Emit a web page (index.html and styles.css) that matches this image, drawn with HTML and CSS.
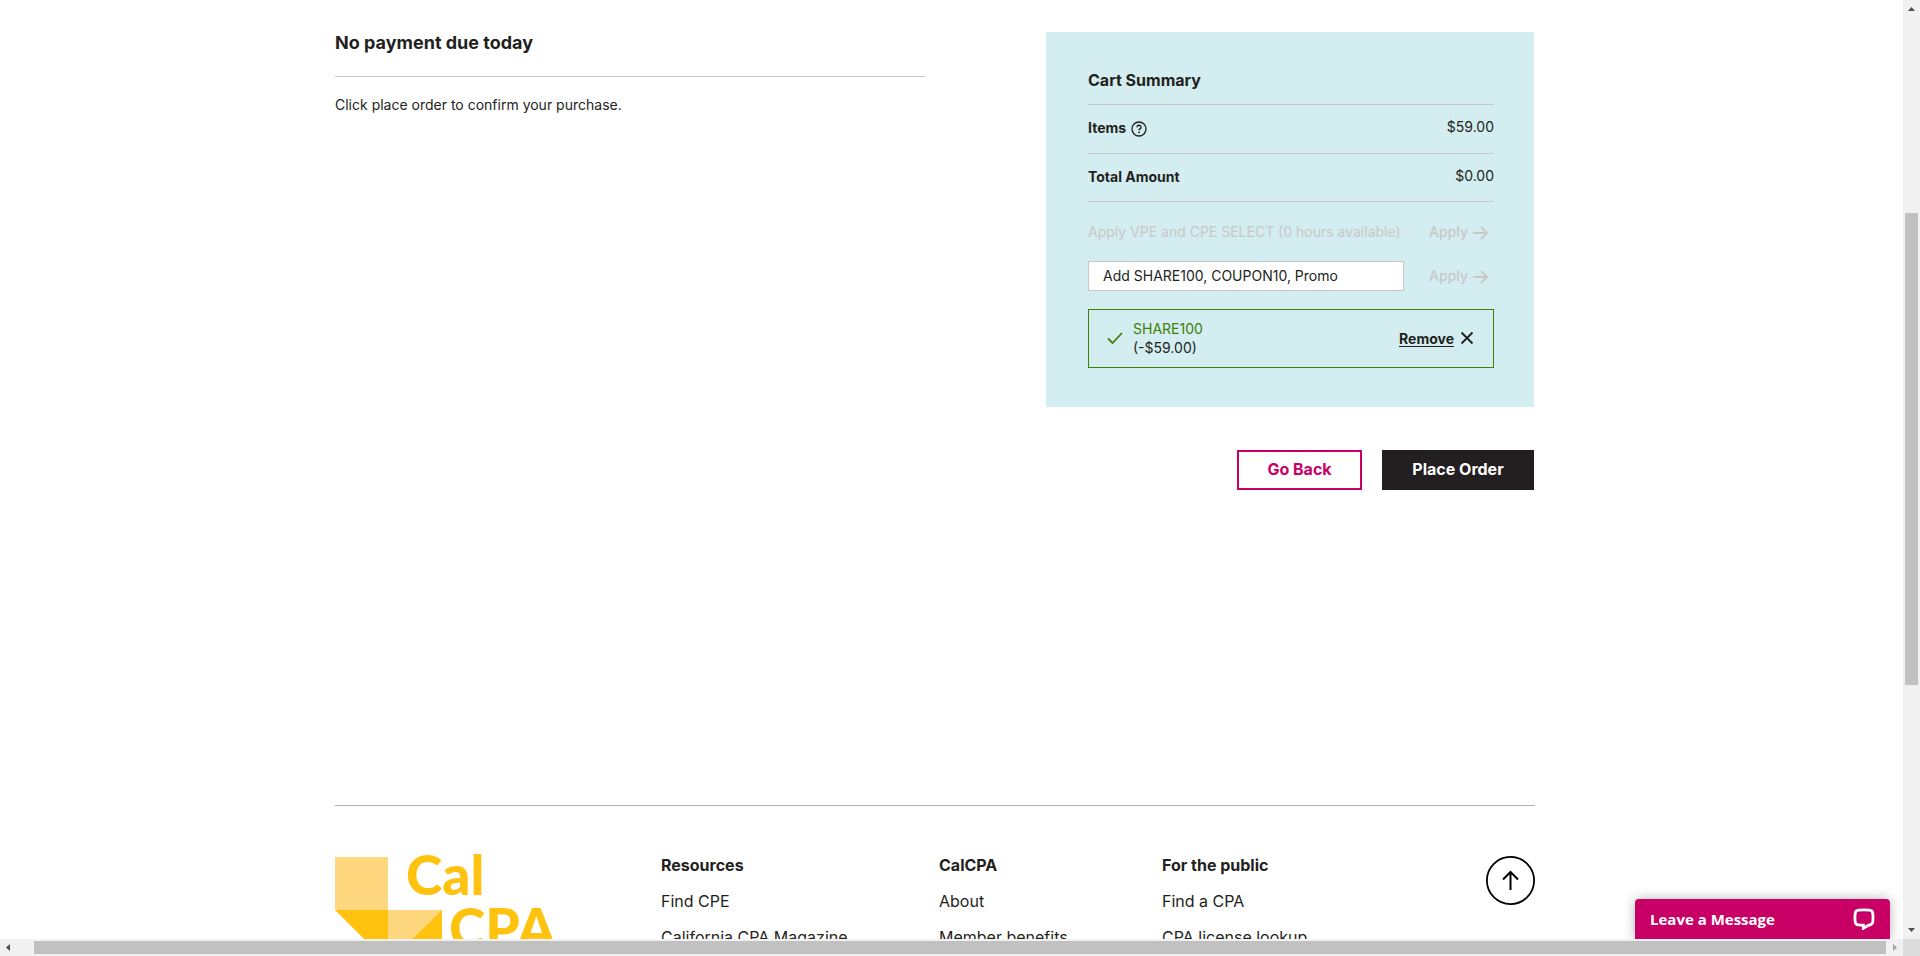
FILE: index.html
```html
<!DOCTYPE html>
<html lang="en">
<head>
<meta charset="utf-8">
<title>Checkout - CalCPA</title>
<link rel="stylesheet" href="styles.css">
</head>
<body>
<div class="window">
  <div class="viewport">
    <div class="page">
      <main class="checkout">
        <section class="payment">
          <h2 class="payment-title">No payment due today</h2>
          <p class="payment-note">Click place order to confirm your purchase.</p>
        </section>
        <div class="side">
          <section class="cart">
            <h3 class="cart-title">Cart Summary</h3>
            <dl class="totals">
              <div class="total-row">
                <dt>Items
                  <svg class="icon-help" viewBox="0 0 16 16" width="16" height="16" aria-hidden="true"><circle cx="8" cy="8" r="7" fill="none" stroke="currentColor" stroke-width="1.3"/><path d="M6 6.2a2 2 0 1 1 2.9 1.8q-.9.4-.9 1.2" fill="none" stroke="currentColor" stroke-width="1.4"/><circle cx="8" cy="11.3" r=".9" fill="currentColor"/></svg>
                </dt>
                <dd>$59.00</dd>
              </div>
              <div class="total-row total-last">
                <dt>Total Amount</dt>
                <dd>$0.00</dd>
              </div>
            </dl>
            <div class="apply-row credit">
              <span class="credit-label">Apply VPE and CPE SELECT (0 hours available)</span>
              <button class="apply" type="button" disabled>Apply
                <svg viewBox="0 0 16 14" width="16" height="14" aria-hidden="true"><path d="M1 7h13M8.500 1.500 14 7l-5.500 5.500" fill="none" stroke="currentColor" stroke-width="2" stroke-linecap="round"/></svg>
              </button>
            </div>
            <div class="apply-row promo">
              <input class="promo-input" type="text" aria-label="Promo code" placeholder="Add SHARE100, COUPON10, Promo">
              <button class="apply" type="button" disabled>Apply
                <svg viewBox="0 0 16 14" width="16" height="14" aria-hidden="true"><path d="M1 7h13M8.500 1.500 14 7l-5.500 5.500" fill="none" stroke="currentColor" stroke-width="2" stroke-linecap="round"/></svg>
              </button>
            </div>
            <div class="coupon">
              <svg class="icon-check" viewBox="0 0 16 12" width="16" height="12" aria-hidden="true"><path d="M1 6.500 5.500 11 15 1" fill="none" stroke="currentColor" stroke-width="1.800"/></svg>
              <div class="coupon-text">
                <div class="coupon-code">SHARE100</div>
                <div>(-$59.00)</div>
              </div>
              <button class="remove" type="button"><span class="remove-label">Remove</span>
                <svg viewBox="0 0 14 14" width="14" height="14" aria-hidden="true"><path d="M1.500 1.500l11 11M12.500 1.500l-11 11" fill="none" stroke="currentColor" stroke-width="1.800"/></svg>
              </button>
            </div>
          </section>
          <div class="actions">
            <button class="btn btn-outline" type="button">Go Back</button>
            <button class="btn btn-solid" type="button">Place Order</button>
          </div>
        </div>
      </main>
      <footer class="footer">
        <svg class="logo" viewBox="0 0 220 108" width="220" height="108" role="img" aria-label="CalCPA">
          <rect x="0" y="1" width="53" height="53" fill="#ffd77f"/>
          <rect x="53" y="54" width="54" height="53" fill="#ffd77f"/>
          <path d="M0 54h53v53zM107 54v53H53z" fill="#ffc20e"/>
          <text class="logo-text" x="71" y="39">Cal</text>
          <text class="logo-text" x="114" y="92">CPA</text>
        </svg>
        <nav class="links">
          <h4>Resources</h4>
          <a href="#">Find CPE</a>
          <a href="#">California CPA Magazine</a>
        </nav>
        <nav class="links">
          <h4>CalCPA</h4>
          <a href="#">About</a>
          <a href="#">Member benefits</a>
        </nav>
        <nav class="links">
          <h4>For the public</h4>
          <a href="#">Find a CPA</a>
          <a href="#">CPA license lookup</a>
        </nav>
        <a class="to-top" href="#" aria-label="Back to top">
          <svg viewBox="0 0 49 49" width="49" height="49" aria-hidden="true"><circle cx="24.500" cy="24.500" r="23.600" fill="none" stroke="currentColor" stroke-width="1.800"/><path d="M24.500 34V16M17 23.500l7.500-7.500 7.500 7.500" fill="none" stroke="currentColor" stroke-width="2"/></svg>
        </a>
      </footer>
    </div>
    <button class="chat" type="button"><span>Leave a Message</span>
      <svg viewBox="0 0 22 22" width="22" height="22" aria-hidden="true"><path d="M5.500 2.200Q11 1.500 16.500 2.200 19.500 2.500 19.800 5.500q.4 4 0 8.500-.5 2.600-3.800 3.100-2.500 1-5.700 3.300v-3.200q-2.300.1-4.800-.3Q2.500 16.500 2.200 14q-.5-4.300 0-8.500.3-3 3.300-3.300z" fill="none" stroke="currentColor" stroke-width="2.800"/></svg>
    </button>
  </div>
  <div class="bar bar-v" aria-hidden="true">
    <svg class="arrow" viewBox="0 0 7 4" width="7" height="4"><path d="M3.500 0 7 4H0z"/></svg>
    <div class="track-v"><div class="thumb"></div></div>
    <svg class="arrow" viewBox="0 0 7 4" width="7" height="4"><path d="M0 0h7L3.500 4z"/></svg>
  </div>
  <div class="bar bar-h" aria-hidden="true">
    <svg class="arrow" viewBox="0 0 4 7" width="4" height="7"><path d="M4 0v7L0 3.500z"/></svg>
    <div class="track-h"><div class="thumb"></div></div>
    <svg class="arrow arrow-off" viewBox="0 0 4 7" width="4" height="7"><path d="M0 0l4 3.500L0 7z"/></svg>
  </div>
  <div class="corner"></div>
</div>
</body>
</html>
```
FILE: styles.css
```css
* { box-sizing: border-box; }
body {
  margin: 0;
  color: #231f20;
  background: #fff;
  font: 14px/20px Inter, "Liberation Sans", sans-serif;
}
h2, h3, h4, p, dl, dd { margin: 0; }
button { font: inherit; color: inherit; background: none; border: 0; padding: 0; cursor: pointer; }
svg { display: block; flex: none; }

.window {
  display: grid;
  grid-template: minmax(0, 1fr) 17px / minmax(0, 1fr) 17px;
  height: 100vh;
}
.viewport { position: relative; overflow: hidden; }
.page { padding: 32px 33px 0 0; }

.checkout {
  display: flex;
  justify-content: space-between;
  max-width: 1200px;
  margin: 0 auto;
  padding-right: 1px;
}
.payment { width: 590px; }
.payment-title {
  padding-bottom: 22px;
  border-bottom: 1px solid #c8c8c8;
  font-size: 18px;
  line-height: 22px;
}
.payment-note { padding-top: 18px; }
.side { width: 488px; }

.cart { padding: 36px 40px 39px 42px; background: #d3edf0; }
.cart-title {
  padding-bottom: 12px;
  border-bottom: 1px solid #c8c8c8;
  font-size: 16px;
  line-height: 24px;
}
.total-row {
  display: flex;
  justify-content: space-between;
  padding: 12px 0 16px;
  border-bottom: 1px solid #c8c8c8;
}
.total-last { padding-bottom: 15px; }
.total-row dt { display: flex; gap: 5px; font-weight: 700; padding-top: 1px; height: 20px; }
.icon-help { margin-top: 3px; }

.apply-row { display: flex; justify-content: space-between; align-items: center; color: #c8c8c8; }
.credit { padding: 20px 0 19px; }
.apply { display: flex; align-items: center; gap: 5px; padding-right: 5px; color: #c8c8c8; font-weight: 500; }
.apply svg { margin-top: 2px; }
.promo-input {
  width: 316px;
  height: 30px;
  padding: 0 14px 2px;
  border: 1px solid #c8c8c8;
  border-radius: 0;
  color: #231f20;
  font: 14px/20px Inter, "Liberation Sans", sans-serif;
}
.promo-input::placeholder { color: #231f20; opacity: 1; }
.coupon {
  display: flex;
  align-items: center;
  gap: 10px;
  margin-top: 18px;
  padding: 9px 19px 10px 18px;
  border: 1px solid #3f8006;
  line-height: 19px;
}
.icon-check { color: #3f8006; }
.coupon-code { color: #3f8006; }
.remove { display: flex; align-items: center; gap: 6px; margin-left: auto; font-weight: 700; }
.remove-label { text-decoration: underline; text-underline-offset: 2px; }

.actions { display: flex; justify-content: flex-end; gap: 20px; padding-top: 43px; }
.btn { height: 40px; padding-bottom: 2px; border: 2px solid #c80066; font-size: 16px; font-weight: 700; }
.btn-outline { width: 125px; color: #c80066; }
.btn-solid { width: 152px; color: #fff; background: #231f20; border-color: #231f20; }

.footer {
  display: grid;
  grid-template-columns: 326px 278px 223px 1fr;
  grid-auto-flow: column;
  grid-auto-columns: auto;
  max-width: 1200px;
  margin: 315px auto 0;
  padding-top: 50px;
  border-top: 1px solid #b3b3b3;
  font-size: 16px;
}
.logo { overflow: visible; }
.logo-text { font: 900 55px Lato, sans-serif; fill: #ffc20e; }
.links { display: flex; flex-direction: column; align-items: flex-start; gap: 12px; line-height: 24px; }
.links h4 { font-size: 16px; margin-top: -3px; }
.links a { color: #231f20; text-decoration: none; }
.to-top { color: #000; }

.chat {
  position: absolute;
  right: 13px;
  bottom: 0;
  display: flex;
  justify-content: space-between;
  align-items: center;
  width: 255px;
  height: 40px;
  padding: 0 15px 0 15px;
  border-radius: 4px 4px 0 0;
  color: #fff;
  background: #c80066;
  box-shadow: 0 0 12px rgba(0, 0, 0, .3);
  font: 700 15px/20px "Open Sans", "Noto Sans", sans-serif;
}

.bar { display: flex; align-items: center; justify-content: space-between; background: #f1f1f1; }
.bar-v { flex-direction: column; padding: 7px 0; }
.bar-h { padding: 0 6px; }
.arrow { fill: #505050; }
.arrow-off { fill: #a3a3a3; }
.track-v { flex: 1; width: 13px; padding-top: 202px; }
.track-v .thumb { height: 472px; }
.track-h { flex: 1; height: 13px; padding: 0 7px 0 24px; }
.track-h .thumb { height: 13px; }
.thumb { background: #c1c1c1; }
.corner { background: #dcdcdc; }
```
